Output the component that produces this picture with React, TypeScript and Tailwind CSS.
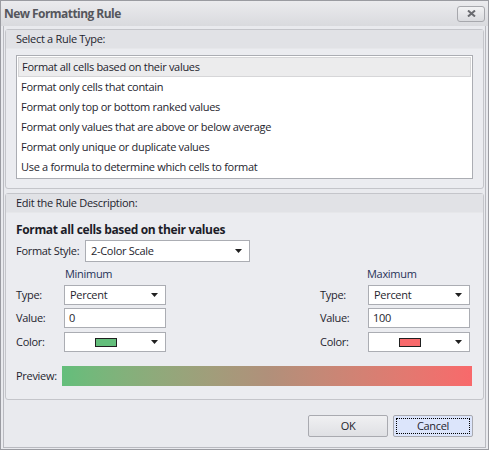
import React from "react";

const font = "font-['Segoe_UI','Open_Sans','Liberation_Sans',sans-serif]";

const rules = [
  "Format all cells based on their values",
  "Format only cells that contain",
  "Format only top or bottom ranked values",
  "Format only values that are above or below average",
  "Format only unique or duplicate values",
  "Use a formula to determine which cells to format",
];

const Caret = (): React.ReactNode => (
  <svg width="7" height="4" viewBox="0 0 7 4" className="shrink-0">
    <path d="M0 0h7L3.5 4z" fill="#202020" />
  </svg>
);

const Combo = ({ children, className = "" }: { children: React.ReactNode; className?: string }): React.ReactNode => (
  <div
    className={`flex items-center h-[20px] border border-[#abadb3] bg-white pl-[5px] pr-[7px] ${className}`}
  >
    <div className="flex-1 flex items-center">{children}</div>
    <Caret />
  </div>
);

const Swatch = ({ color }: { color: string }): React.ReactNode => (
  <div className="flex-1 flex justify-center pr-[10px]">
    <div className="w-[22px] h-[9px] border border-[#202020]" style={{ background: color }} />
  </div>
);

const GroupBox = ({
  title,
  className = "",
  children,
}: {
  title: string;
  className?: string;
  children: React.ReactNode;
}): React.ReactNode => (
  <div className={`rounded-[3px] border border-[#c4c5ca] bg-[#ebecf0] flex flex-col ${className}`}>
    <div className="h-[19px] flex items-center pl-[10px] bg-[#e1e2e6] border-b border-[#e6e7ea] text-[#1e1e2e]">
      {title}
    </div>
    {children}
  </div>
);

const ValueSide = ({
  heading,
  value,
  color,
  headPad,
}: {
  heading: string;
  value: string;
  color: string;
  headPad: string;
}): React.ReactNode => (
  <div className="flex flex-col w-[150px]">
    <div className={`h-[16px] flex items-center text-[#263258] ${headPad}`}>{heading}</div>
    <div className="flex items-center mt-[3px]">
      <span className="w-[48px] text-[#1e1e2e]">Type:</span>
      <Combo className="w-[102px]">Percent</Combo>
    </div>
    <div className="flex items-center mt-[3px]">
      <span className="w-[48px] text-[#1e1e2e]">Value:</span>
      <div className="w-[102px] h-[20px] border border-[#abadb3] bg-white flex items-center pl-[4px]">{value}</div>
    </div>
    <div className="flex items-center mt-[4px]">
      <span className="w-[48px] text-[#1e1e2e]">Color:</span>
      <Combo className="w-[102px]">
        <Swatch color={color} />
      </Combo>
    </div>
  </div>
);

export default function App(): React.ReactNode {
  return (
    <div className={`w-[489px] h-[450px] bg-[#c9cacf] ${font} text-[11px] tracking-[-0.3px] text-[#1e1e2e] flex flex-col`}>
      <div className="flex-1 flex flex-col border border-[#9a9ba1] bg-[#e9eaee]">
        {/* title bar */}
        <div className="h-[25px] flex items-center justify-between pl-[3px] pr-[3px] bg-gradient-to-b from-[#ebebee] to-[#d9dade]">
          <span className="font-bold text-[12px] tracking-[-0.55px] text-[#55565c]">New Formatting Rule</span>
          <div className="w-[28px] h-[16px] rounded-[3px] border border-[#a7a8ad] bg-gradient-to-b from-[#f2f2f4] to-[#dadbdf] flex items-center justify-center">
            <svg width="9" height="7" viewBox="0 0 9 7">
              <path d="M1 0.5l7 6M8 0.5l-7 6" stroke="#6a6b70" strokeWidth="2" />
            </svg>
          </div>
        </div>

        {/* client */}
        <div className="flex-1 flex flex-col mx-[2px] mb-[1px] border-l border-r border-b border-[#b9bac0] px-[1px] pt-[3px]">
          <GroupBox title="Select a Rule Type:" className="h-[160px]">
            <div className="mx-[10px] mt-[6px] h-[124px] border border-[#abadb3] bg-white p-[1px] flex flex-col">
              {rules.map((r, i) => (
                <div
                  key={r}
                  className={`h-[20px] flex items-center pl-[3px] ${i === 0 ? "bg-[#ececed] border border-[#d6d6d8]" : ""}`}
                >
                  {r}
                </div>
              ))}
            </div>
          </GroupBox>

          <GroupBox title="Edit the Rule Description:" className="mt-[4px] h-[207px]">
            <div className="flex flex-col pl-[10px] pr-[11px] pt-[9px]">
              <div className="h-[16px] flex items-center font-bold text-[12px] tracking-[-0.35px] text-[#1c1c28]">
                Format all cells based on their values
              </div>
              <div className="flex items-center mt-[2px]">
                <span className="w-[69px]">Format Style:</span>
                <Combo className="w-[165px] h-[22px]">2-Color Scale</Combo>
              </div>
              <div className="flex gap-[154px] mt-[4px]">
                <ValueSide heading="Minimum" value="0" color="#63be7b" headPad="pl-[49px]" />
                <ValueSide heading="Maximum" value="100" color="#f8696b" headPad="pl-[47px]" />
              </div>
              <div className="flex items-center mt-[14px]">
                <span className="w-[46px]">Preview:</span>
                <div className="flex-1 h-[20px] bg-gradient-to-r from-[#63be7b] via-[#b0907a] to-[#f8696b]" />
              </div>
            </div>
          </GroupBox>

          <div className="flex justify-end gap-[5px] mt-[15px] pr-[11px]">
            <button className="w-[80px] h-[22px] rounded-[2px] border border-[#a9aab0] bg-gradient-to-b from-[#f0f0f2] to-[#dfe0e4] text-[#1e1e2e]">
              OK
            </button>
            <button className="w-[80px] h-[22px] rounded-[2px] border border-[#a9aab0] bg-[#dce5fb] text-[#1e1e2e] p-[2px]">
              <div className="w-full h-full border border-dotted border-black flex items-center justify-center">
                Cancel
              </div>
            </button>
          </div>
        </div>
      </div>
    </div>
  );
}
